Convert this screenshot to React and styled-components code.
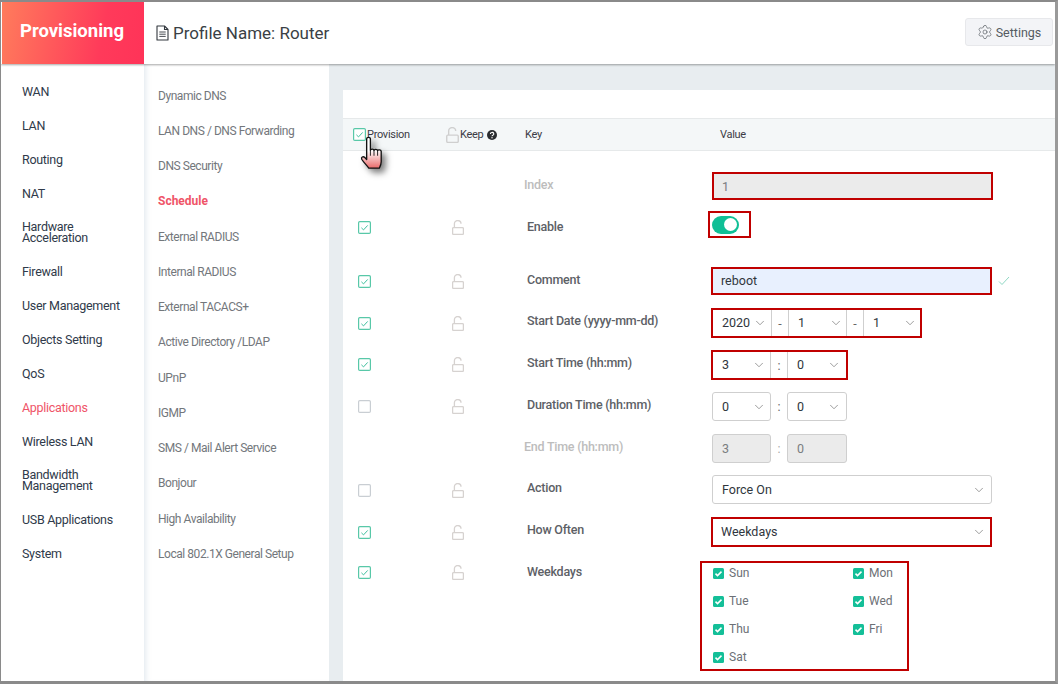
import React from 'react';
import styled, { createGlobalStyle } from 'styled-components';
import { Settings as Gear, ChevronDown } from 'lucide-react';

const FONT = `"Roboto", "Noto Sans", sans-serif`;

const Global = createGlobalStyle`
  html, body { margin: 0; padding: 0; background: #fff; }
  body { font-family: ${FONT}; }
  * { box-sizing: border-box; }
`;

const Frame = styled.div`
  width: 1058px; height: 684px; overflow: hidden; position: relative;
  display: flex; flex-direction: column;
  border-top: 2px solid #8a8a8a; border-left: 1px solid #8a8a8a;
  border-right: 3px solid #9a9a9a; border-bottom: 3px solid #8a8a8a;
`;
const Header = styled.header`
  height: 62px; flex: none; display: flex; align-items: stretch; background: #fff;
  box-shadow: 0 1px 2px rgba(0,0,0,.35); position: relative; z-index: 2;
`;
const Brand = styled.div`
  width: 142px; margin-left: 1px; background: linear-gradient(100deg, #ff7c5c 0%, #ff3a5a 70%, #ff3358 100%);
  color: #fff; font-size: 18.5px; font-weight: 700; display: flex; align-items: center; justify-content: center;
  padding-bottom: 5px; padding-right: 2px;
`;
const Title = styled.div`
  flex: 1; display: flex; align-items: center; gap: 4px; padding-left: 12px;
  font-size: 17px; color: #3a3f45;
`;
const SettingsBtn = styled.div`
  align-self: flex-start; margin-top: 16px; width: 88px; height: 28px; background: #f3f4f7; border: 1px solid #e7e8eb; border-radius: 3px;
  display: flex; align-items: center; justify-content: center; gap: 3px; font-size: 12.5px; color: #555b61;
  margin-right: 2px;
`;
const Body = styled.div`flex: 1; display: flex; min-height: 0;`;
const MainNav = styled.nav`
  width: 143px; flex: none; background: #fff; padding: 10px 0 0 21px; display: flex; flex-direction: column;
`;
const MainItem = styled.div`
  min-height: ${p => p.$tall ? 45 : 34}px; padding-top: ${p => p.$tall ? 12 : 0}px; display: flex; align-items: ${p => p.$tall ? 'flex-start' : 'center'};
  font-size: 12.5px; letter-spacing: -.3px; line-height: 11px; color: ${p => p.$active ? '#ef5468' : '#2f3a4a'};
  margin-top: ${p => p.$tall ? -1 : 0}px;
`;
const MainLabel = styled.span`white-space: pre-line;`;
const SubNav = styled.nav`
  width: 185px; flex: none; background: #fff; padding: 14px 0 0 14px; display: flex; flex-direction: column;
  box-shadow: inset 6px 0 6px -5px rgba(120,150,180,.25);
`;
const SubItem = styled.div`
  height: 35.25px; display: flex; align-items: center; font-size: 12px; letter-spacing: ${p => p.$active ? 0 : -.45}px;
  color: ${p => p.$active ? '#ef5468' : '#73777c'}; font-weight: ${p => p.$active ? 700 : 400};
`;
const Content = styled.main`
  flex: 1; background: #e8edf0; padding: 26px 0 0 14px; min-width: 0;
`;
const Card = styled.section`
  background: #fff; height: 100%; position: relative;
`;
const CardTop = styled.div`height: 28px;`;
const TableHead = styled.div`
  height: 33px; background: #f4f7f8; border-top: 1px solid #e6e9ea; border-bottom: 1px solid #e6e9ea;
  display: grid; grid-template-columns: 93px 79px 195px 1fr; align-items: center; padding-left: 10px;
  font-size: 11px; letter-spacing: -.3px; color: #3c3c46;
`;
const HeadCell = styled.div`display: flex; align-items: center; gap: 1px;`;
const Rows = styled.div`padding-top: 21px;`;
const Row = styled.div`
  height: ${p => p.$h || 42}px; display: grid; grid-template-columns: 92px 77px 185px 1fr; align-items: start;
  padding-left: 15px;
`;
const CheckCell = styled.div`padding-top: ${p => p.$top ?? 8}px; display: flex;`;
const LockCell = styled.div`padding-top: ${p => p.$top ?? 7}px; padding-left: 2px; display: flex;`;
const Key = styled.div`
  padding-top: ${p => p.$top ?? 5}px; font-size: 12.5px; letter-spacing: -.25px; margin-left: ${p => p.$shift ?? 0}px;
  color: ${p => p.$muted ? '#bdbdbd' : '#5d6166'};
  font-weight: 500; line-height: 16px;
`;
const Value = styled.div`display: flex; align-items: flex-start; position: relative;`;
const Field = styled.div`
  width: ${p => p.$w}px; height: ${p => p.$h ?? 29}px; margin: ${p => p.$mt ?? 0}px 0 0 ${p => p.$ml ?? 0}px;
  border: 1px solid #cfcfcf; border-radius: ${p => (p.$marked || p.$grouped) ? 0 : 3}px;
  background: ${p => p.$bg || '#fff'}; display: flex; align-items: center; padding-left: 9px;
  padding-bottom: ${p => p.$lift ? 2 : 0}px;
  font-size: 12.5px; color: ${p => p.$dim ? '#7a7d80' : '#30363d'};
  position: relative; flex: none;
  ${p => p.$marked ? 'outline: 2px solid #c00000; outline-offset: -2px;' : ''}
`;
const Arrow = styled(ChevronDown)`
  position: absolute; right: ${p => p.$r ?? 4}px; top: 50%; margin-top: -7px; color: #7d7d7d;
`;
const Sep = styled.div`
  width: 16px; display: flex; align-items: center; justify-content: center; flex: none;
  font-size: 12.5px; color: ${p => p.$dim ? '#aaa' : '#666'};
`;
const Group = styled.div`
  display: flex; position: relative; margin-top: ${p => p.$marked ? 1 : 0}px;
  ${p => p.$marked ? `&::after { content: ''; position: absolute; inset: -1px; border: 2px solid #c00000; pointer-events: none; z-index: 1; }` : ''}
`;
const ToggleBox = styled.div`
  width: 43px; height: 27px; margin-left: -4px; margin-top: -3px; border: 2px solid #c00000; display: flex; align-items: center; padding-left: 2px;
`;
const Track = styled.div`
  width: 27px; height: 18px; border-radius: 9px; background: #10bf96; display: flex; justify-content: flex-end; align-items: center; padding-right: 2px;
`;
const Knob = styled.div`width: 13px; height: 13px; border-radius: 50%; background: #fff;`;
const Valid = styled.svg`position: absolute; left: 286px; top: 10px;`;
const Days = styled.div`
  margin-left: -12px; margin-top: 1px; width: 209px; height: 110px; border: 2px solid #c00000; display: grid;
  grid-template-columns: 140px 1fr; grid-auto-rows: 20px; row-gap: 8px; padding: 0 0 0 11px; align-content: start;
`;
const Day = styled.div`
  display: flex; align-items: center; gap: 5px; font-size: 12px; color: #6c7076;
`;
const DayBox = styled.span`
  width: 11px; height: 11px; background: #14bf98; border-radius: 1.5px; display: inline-flex; align-items: center; justify-content: center;
`;
const Hand = styled.svg`
  position: absolute; left: 17px; top: 46px; z-index: 3; filter: drop-shadow(4px 4px 3px rgba(0,0,0,.5));
`;

const Doc = () => (
  <svg width="13" height="16" viewBox="0 0 13 16" fill="none" stroke="#33383e" strokeWidth="1.1">
    <path d="M1 1h7.5L12 4.5V15H1z" strokeLinejoin="round"/><path d="M8.5 1v3.5H12"/>
    <path d="M3.3 7h6.4M3.3 9.2h6.4M3.3 11.4h6.4" strokeWidth=".9"/>
  </svg>
);
const Check = ({ on = true }) => (
  <svg width="13" height="13" viewBox="0 0 13 13" fill="none">
    <rect x=".6" y=".6" width="11.8" height="11.8" rx="1.2" stroke={on ? '#58c8a8' : '#c9ced3'} strokeWidth="1.2" fill="#fff"/>
    {on && <path d="M3.4 6.8l2.1 2.1 4.2-4.5" stroke="#3fc09e" strokeWidth="1"/>}
  </svg>
);
const Lock = ({ w = 12, h = 15, c = '#d6d2d0' }) => (
  <svg width={w} height={h} viewBox="0 0 12 15" fill="none" stroke={c} strokeWidth="1.3">
    <rect x=".6" y="7.6" width="10.8" height="6.8" rx="1"/>
    <path d="M2.4 7.6V3.8a3.3 3.3 0 0 1 6.6 0"/>
  </svg>
);
const Question = () => (
  <svg width="10" height="10" viewBox="0 0 10 10"><circle cx="5" cy="5" r="5" fill="#2a2d30"/>
    <path d="M3.4 3.9a1.7 1.5 0 1 1 2.4 1.4c-.6.3-.8.5-.8 1" stroke="#fff" strokeWidth="1.1" fill="none"/><circle cx="5" cy="7.8" r=".7" fill="#fff"/></svg>
);
const Chev = ({ r }) => <Arrow size={14} strokeWidth={1.3} $r={r} />;

const mainItems = [['WAN'],['LAN'],['Routing'],['NAT'],['Hardware\nAcceleration',1],['Firewall'],['User Management'],['Objects Setting'],['QoS'],['Applications',0,1],['Wireless LAN'],['Bandwidth\nManagement',1],['USB Applications'],['System']];
const subItems = ['Dynamic DNS','LAN DNS / DNS Forwarding','DNS Security','Schedule','External RADIUS','Internal RADIUS','External TACACS+','Active Directory /LDAP','UPnP','IGMP','SMS / Mail Alert Service','Bonjour','High Availability','Local 802.1X General Setup'];

const Sel = ({ w, v, grouped, r }) => <Field $w={w} $grouped={grouped} $lift={grouped} $h={grouped ? 28 : 29}>{v}<Chev r={r} /></Field>;

export default function App() {
  return (
    <Frame>
      <Global />
      <Header>
        <Brand>Provisioning</Brand>
        <Title><Doc />Profile Name: Router</Title>
        <SettingsBtn><Gear size={16} strokeWidth={1} />Settings</SettingsBtn>
      </Header>
      <Body>
        <MainNav>
          {mainItems.map(([t, tall, act]) => (
            <MainItem key={t} $tall={tall} $active={act}>
              <MainLabel>{t}</MainLabel>
            </MainItem>
          ))}
        </MainNav>
        <SubNav>
          {subItems.map(s => <SubItem key={s} $active={s === 'Schedule'}>{s}</SubItem>)}
        </SubNav>
        <Content>
          <Card>
            <CardTop />
            <TableHead>
              <HeadCell><Check />Provision</HeadCell>
              <HeadCell><Lock w={13} h={16} c="#cfcfcf"/>Keep&nbsp;<Question /></HeadCell>
              <HeadCell>Key</HeadCell>
              <HeadCell>Value</HeadCell>
            </TableHead>
            <Hand width="24" height="35" viewBox="0 0 18 28" preserveAspectRatio="none">
              <defs><linearGradient id="hg" x1="0" y1="0" x2="0" y2="1"><stop offset="0.42" stopColor="#fff"/><stop offset="1" stopColor="#ea6a6a"/></linearGradient></defs>
              <path d="M5 2.2c0-1.6 2.8-1.6 2.8 0v9.2c0-1 2.6-1.2 2.7.2 0-1 2.6-1.2 2.7.2.2-1 2.6-1 2.7.5v8.2c0 2.2-.6 3.4-1.4 5.2H6.6C5.6 24 2.6 21 1.3 18.6c-.7-1.5 1-2.7 2.3-1.4L5 18.8z" fill="url(#hg)" stroke="#111" strokeWidth="1" strokeLinejoin="round"/>
              <path d="M7.8 11.4v4.4M10.5 11.6v4.2M13.2 11.8v4" stroke="#111" strokeWidth=".7"/>
            </Hand>
            <Rows>
              <Row><span/><span/><Key $muted $shift={-3}>Index</Key>
                <Value><Field $w={281} $h={28} $marked $bg="#ebebeb" $dim>1</Field></Value></Row>
              <Row $h={52}><CheckCell $top={7}><Check/></CheckCell><LockCell $top={6}><Lock/></LockCell><Key $top={5}>Enable</Key>
                <Value><ToggleBox><Track><Knob/></Track></ToggleBox></Value></Row>
              <Row><CheckCell $top={9}><Check/></CheckCell><LockCell $top={8}><Lock/></LockCell><Key $top={6}>Comment</Key>
                <Value><Field $w={281} $h={28} $mt={1} $ml={-1} $marked $lift $bg="#e8f0fe">reboot</Field>
                  <Valid width="12" height="10" viewBox="0 0 12 10"><path d="M1 5.5l3 3L11 1" stroke="#8fd8c4" strokeWidth="1" fill="none"/></Valid></Value></Row>
              <Row><CheckCell $top={9}><Check/></CheckCell><LockCell $top={8}><Lock/></LockCell><Key>Start Date (yyyy-mm-dd)</Key>
                <Value><Group $marked><Sel grouped w={60} v="2020"/><Sep>-</Sep><Sel grouped w={59} v="1" r={3}/><Sep>-</Sep><Sel grouped w={58} v="1" r={3}/></Group></Value></Row>
              <Row><CheckCell><Check/></CheckCell><LockCell><Lock/></LockCell><Key>Start Time (hh:mm)</Key>
                <Value><Group $marked><Sel grouped w={59} v="3"/><Sep>:</Sep><Sel grouped w={60} v="0" r={5}/></Group></Value></Row>
              <Row><CheckCell><Check on={false}/></CheckCell><LockCell><Lock/></LockCell><Key>Duration Time (hh:mm)</Key>
                <Value><Group><Sel w={59} v="0"/><Sep>:</Sep><Sel w={60} v="0" r={5}/></Group></Value></Row>
              <Row><span/><span/><Key $muted $shift={-3}>End Time (hh:mm)</Key>
                <Value><Group><Field $w={59} $bg="#ebebeb" $dim>3</Field><Sep $dim>:</Sep><Field $w={60} $bg="#ebebeb" $dim>0</Field></Group></Value></Row>
              <Row><CheckCell><Check on={false}/></CheckCell><LockCell><Lock/></LockCell><Key $top={4}>Action</Key>
                <Value><Field $w={280} $mt={-1}>Force On<Chev r={5}/></Field></Value></Row>
              <Row><CheckCell><Check/></CheckCell><LockCell><Lock/></LockCell><Key $top={4}>How Often</Key>
                <Value><Field $w={281} $h={30} $mt={-1} $ml={-1} $marked $lift>Weekdays<Chev r={5}/></Field></Value></Row>
              <Row $h={120}><CheckCell $top={6}><Check/></CheckCell><LockCell $top={5}><Lock/></LockCell><Key $top={4}>Weekdays</Key>
                <Value><Days>
                  {['Sun','Mon','Tue','Wed','Thu','Fri','Sat'].map(d => (
                    <Day key={d}><DayBox><svg width="9" height="9" viewBox="0 0 9 9"><path d="M1.5 4.6l2 2 4-4" stroke="#fff" strokeWidth="1.5" fill="none"/></svg></DayBox>{d}</Day>
                  ))}
                </Days></Value></Row>
            </Rows>
          </Card>
        </Content>
      </Body>
    </Frame>
  );
}
